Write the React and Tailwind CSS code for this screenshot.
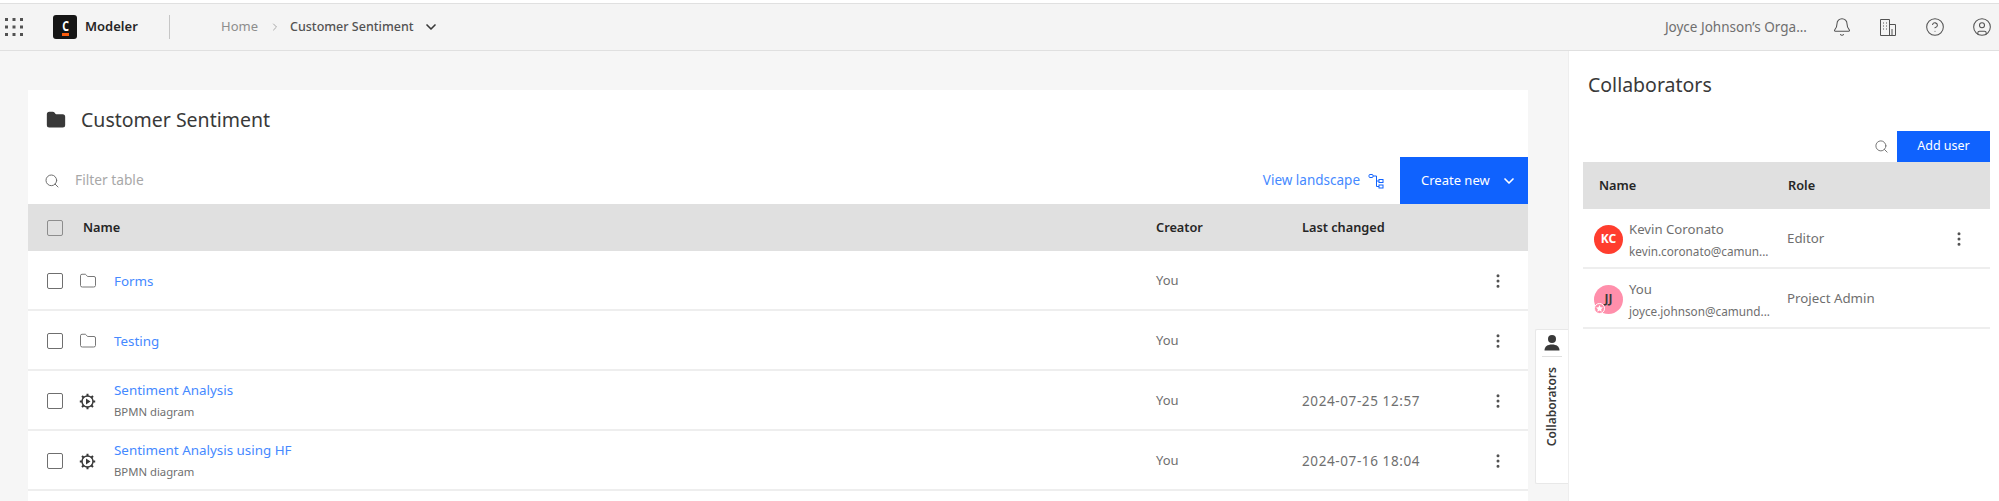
import { Bell, ChevronDown, ChevronRight, CircleHelp, CircleUser, EllipsisVertical, Folder, Search } from "lucide-react";

const rows = [
  { name: "Forms", kind: "folder", creator: "You", changed: "" },
  { name: "Testing", kind: "folder", creator: "You", changed: "" },
  { name: "Sentiment Analysis", sub: "BPMN diagram", kind: "bpmn", creator: "You", changed: "2024-07-25 12:57" },
  { name: "Sentiment Analysis using HF", sub: "BPMN diagram", kind: "bpmn", creator: "You", changed: "2024-07-16 18:04" },
];

function GridIcon() {
  const dots = [];
  for (let y = 0; y < 3; y++) {
    for (let x = 0; x < 3; x++) {
      dots.push(<rect key={`${x}-${y}`} x={x * 7.5} y={y * 7.5} width="3" height="3" fill="#525252" />);
    }
  }
  return (
    <svg width="18" height="18" viewBox="0 0 18 18">
      {dots}
    </svg>
  );
}

function Logo() {
  return (
    <div className="flex h-6 w-6 flex-col items-center justify-center rounded-[3px] bg-[#161616]">
      <span className="scale-x-75 text-[14px] leading-[13px] font-bold text-white">C</span>
      <span className="mt-px h-[3px] w-[7px] bg-[#fc5d0d]" />
    </div>
  );
}

function BuildingIcon() {
  return (
    <svg width="20" height="20" viewBox="0 0 20 20" fill="none" stroke="#525252" strokeWidth="1">
      <path d="M2.5 18.5V2.5h9v16M11.5 7.5h6v11h-15" />
      <path d="M5 6h1M8 6h1M5 9h1M8 9h1M5 12h1M8 12h1M14 12v6" />
    </svg>
  );
}

function GearPlayIcon() {
  return (
    <svg width="17" height="17" viewBox="0 0 17 17" fill="none">
      <circle cx="8.5" cy="8.5" r="5.5" stroke="#393939" strokeWidth="1.4" />
      <path
        d="M8.5 0.8v2.4M8.5 13.8v2.4M0.8 8.5h2.4M13.8 8.5h2.4M3 3l1.8 1.8M12.2 12.2L14 14M3 14l1.8-1.8M12.2 4.8L14 3"
        stroke="#393939"
        strokeWidth="2"
      />
      <path d="M7 5.600v5.800l4.500-2.900z" fill="#393939" />
    </svg>
  );
}

function LandscapeIcon() {
  return (
    <svg width="16" height="16" viewBox="0 0 16 16" fill="none" stroke="#0f62fe" strokeWidth="1">
      <rect x="1" y="1.5" width="4" height="3" rx="1" />
      <path d="M5 3h3.500v10.500H11M8.500 8H11" />
      <rect x="11" y="6.500" width="4" height="3" />
      <rect x="11" y="12" width="4" height="3" />
    </svg>
  );
}

function Checkbox() {
  return <span className="block h-4 w-4 rounded-[2px] border border-[#6f6f6f]" />;
}

function TopBar() {
  return (
    <header className="flex h-[48px] items-center border-y border-[#e0e0e0] bg-[#f4f4f4] text-[13px]">
      <div className="ml-[5px] flex w-[48px] shrink-0 items-center">
        <GridIcon />
      </div>
      <Logo />
      <span className="ml-[8px] w-[84px] font-semibold text-[#262626]">Modeler</span>
      <span className="h-6 w-px bg-[#c6c6c6]" />
      <span className="ml-[51px] text-[#8d8d8d]">Home</span>
      <ChevronRight className="ml-[11px] h-3 w-3 text-[#a8a8a8]" />
      <span className="ml-[9px] text-[12.5px] font-medium text-[#525252]">Customer Sentiment</span>
      <ChevronDown className="ml-[9px] h-4 w-4 text-[#393939]" strokeWidth={2.5} />
      <span className="ml-auto text-[13.5px] text-[#6f6f6f]">Joyce Johnson’s Orga...</span>
      <Bell className="ml-[25px] h-[20px] w-[20px] text-[#525252]" strokeWidth={1.25} />
      <span className="ml-[26px]">
        <BuildingIcon />
      </span>
      <CircleHelp className="ml-[27px] h-[20px] w-[20px] text-[#525252]" strokeWidth={1.25} />
      <CircleUser className="ml-[27px] mr-[7px] h-[20px] w-[20px] text-[#525252]" strokeWidth={1.25} />
    </header>
  );
}

function ProjectCard() {
  return (
    <section className="h-full w-[1501px] bg-white">
      <div className="flex h-[67px] items-center pb-[8px] pl-[18px]">
        <Folder className="h-[20px] w-[20px] fill-[#393939] text-[#393939]" />
        <h1 className="ml-[15px] text-[19.5px] font-normal text-[#393939]">Customer Sentiment</h1>
      </div>
      <div className="flex h-[47px] items-center pl-[16px]">
        <Search className="h-4 w-4 text-[#6f6f6f]" strokeWidth={1.5} />
        <span className="ml-[15px] text-[13.75px] text-[#a8a8a8]">Filter table</span>
        <span className="ml-auto text-[13.5px] text-[#4589ff]">View landscape</span>
        <span className="ml-[8px]">
          <LandscapeIcon />
        </span>
        <button className="ml-[16px] flex h-[47px] w-[129px] items-center bg-[#0f62fe] pl-[21px] text-[13px] text-white">
          Create new
          <ChevronDown className="ml-[11px] h-4 w-4" strokeWidth={2.5} />
        </button>
      </div>
      <div className="flex h-[47px] items-center bg-[#e0e0e0] text-[12.75px] font-semibold text-[#262626]">
        <span className="ml-[19px] block h-4 w-4 rounded-[2px] border border-[#8d8d8d]" />
        <span className="ml-[20px] w-[1073px]">Name</span>
        <span className="w-[146px]">Creator</span>
        <span>Last changed</span>
      </div>
      {rows.map((row) => (
        <div key={row.name} className="flex h-[60px] items-center border-b-2 border-[#eeeeee] pt-[2px]">
          <span className="ml-[19px]">
            <Checkbox />
          </span>
          <span className="ml-[15px] flex w-[19px] justify-center">
            {row.kind === "folder" ? (
              <Folder className="h-[18px] w-[18px] text-[#6f6f6f]" strokeWidth={1.25} />
            ) : (
              <GearPlayIcon />
            )}
          </span>
          <div className={row.sub ? "ml-[17px] w-[1042px] pb-[2px]" : "ml-[17px] w-[1042px]"}>
            <div className="text-[13.4px] leading-[18px] text-[#4589ff]">{row.name}</div>
            {row.sub && <div className="mt-[5px] text-[11.3px] leading-[16px] text-[#6f6f6f]">{row.sub}</div>}
          </div>
          <span className="w-[146px] text-[13px] text-[#6f6f6f]">{row.creator}</span>
          <span className="w-[187px] text-[13.5px] tracking-[0.6px] text-[#6f6f6f]">{row.changed}</span>
          <EllipsisVertical className="h-[18px] w-[18px] text-[#525252]" />
        </div>
      ))}
    </section>
  );
}

function CollaboratorsTab() {
  return (
    <div className="ml-[7px] mt-[278px] flex h-[155px] w-[33px] flex-col items-center rounded-l-[2px] border border-r-0 border-[#e8e8e8] bg-white">
      <svg className="mt-[4px] shrink-0" width="18" height="18" viewBox="0 0 18 18" fill="#393939">
        <circle cx="9" cy="5" r="4" />
        <path d="M1.500 16.500c0-4 3-6 7.500-6s7.500 2 7.500 6z" />
      </svg>
      <span className="mt-[4px] h-px w-5 bg-[#e0e0e0]" />
      <span className="mt-[10px] rotate-180 text-[12px] font-semibold text-[#393939] [writing-mode:vertical-rl]">
        Collaborators
      </span>
    </div>
  );
}

function Avatar({ initials, owner }) {
  return (
    <div
      className={
        owner
          ? "relative flex h-[29px] w-[29px] shrink-0 items-center justify-center rounded-full bg-[#ff8fab] text-[12px] font-bold text-[#393939]"
          : "relative flex h-[29px] w-[29px] shrink-0 items-center justify-center rounded-full bg-[#ff3d2e] text-[12px] font-bold text-white"
      }
    >
      {initials}
      {owner && (
        <span className="absolute bottom-0 left-0 flex h-[11px] w-[11px] items-center justify-center rounded-full border border-white bg-[#ff8fab]">
          <svg width="7" height="7" viewBox="0 0 10 10" fill="#ffffff">
            <path d="M5 0l1.500 3.300 3.500.4-2.600 2.400.7 3.500L5 7.900 1.900 9.600l.7-3.500L0 3.700l3.500-.4z" />
          </svg>
        </span>
      )}
    </div>
  );
}

function CollaboratorRow({ initials, name, email, role, owner, menu }) {
  return (
    <div className="flex h-[60px] items-center border-b-2 border-[#eeeeee] pl-[11px] pt-[2px]">
      <Avatar initials={initials} owner={owner} />
      <div className="ml-[6px] w-[158px]">
        <div className="text-[13.2px] leading-[18px] text-[#6f6f6f]">{name}</div>
        <div className="mt-[5px] text-[11.75px] leading-[16px] text-[#6f6f6f]">{email}</div>
      </div>
      <span className="text-[13.3px] text-[#6f6f6f]">{role}</span>
      {menu && <EllipsisVertical className="ml-auto mr-[22px] h-[18px] w-[18px] text-[#525252]" />}
    </div>
  );
}

function CollaboratorsPanel() {
  return (
    <aside className="w-[431px] shrink-0 border-l border-[#eeeeee] bg-white pl-[14px] pr-[9px]">
      <h2 className="mt-[19px] h-[40px] pl-[5px] text-[19.5px] leading-[30px] font-normal text-[#393939]">Collaborators</h2>
      <div className="mt-[21px] flex h-[31px] items-center justify-end">
        <Search className="mr-[8px] h-[15px] w-[15px] text-[#6f6f6f]" strokeWidth={1.5} />
        <button className="h-[31px] w-[93px] bg-[#0f62fe] text-[12.5px] text-white">Add user</button>
      </div>
      <div className="flex h-[47px] items-center bg-[#e0e0e0] pt-[1px] text-[12.75px] font-semibold text-[#262626]">
        <span className="ml-[16px] w-[189px]">Name</span>
        <span>Role</span>
      </div>
      <CollaboratorRow initials="KC" name="Kevin Coronato" email="kevin.coronato@camun..." role="Editor" menu />
      <CollaboratorRow initials="JJ" name="You" email="joyce.johnson@camund..." role="Project Admin" owner />
    </aside>
  );
}

export default function App() {
  return (
    <div className="flex h-[501px] flex-col overflow-hidden bg-white pt-[3px] font-['Noto_Sans',sans-serif]">
      <TopBar />
      <main className="flex min-h-0 flex-1 bg-[#f6f6f6]">
        <div className="flex-1 overflow-hidden pl-[28px] pt-[39px]">
          <ProjectCard />
        </div>
        <CollaboratorsTab />
        <CollaboratorsPanel />
      </main>
    </div>
  );
}
